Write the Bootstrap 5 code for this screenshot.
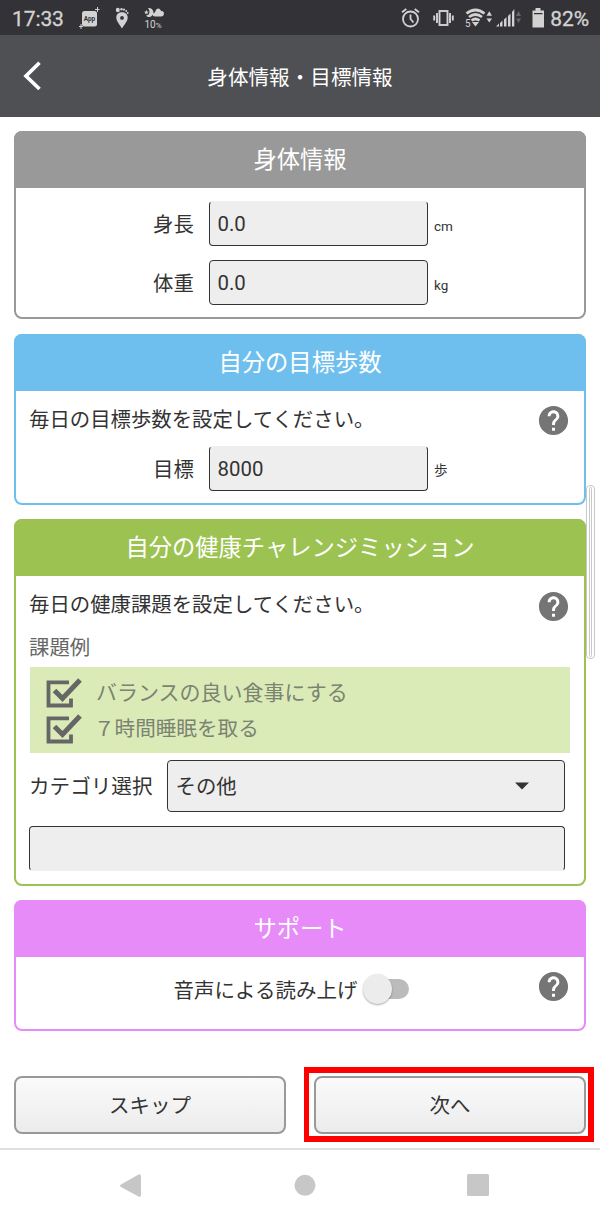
<!DOCTYPE html>
<html lang="ja">
<head>
<meta charset="utf-8">
<meta name="viewport" content="width=device-width, initial-scale=1">
<title>身体情報・目標情報</title>
<link href="https://cdn.jsdelivr.net/npm/bootstrap@5.3.0/dist/css/bootstrap.min.css" rel="stylesheet">
<style>
body{font-family:Roboto,"Noto Sans CJK JP",sans-serif;font-size:20.4px;line-height:30px;color:#333;width:600px;height:1225px;overflow:hidden;background:#fff}
svg{display:block;flex:none}
.status{height:35px;background:#333237;color:#d2d2d2;padding:0 11px 0 12px}
.status-text{font-size:21px;line-height:35px;letter-spacing:-.1px;white-space:nowrap;padding-top:3px;-webkit-text-stroke:.3px #d2d2d2}
.titlebar{height:82px;background:#4f5054;color:#fff;padding-left:23px}
.titlebar h1{font-size:20.6px;font-weight:400;line-height:30px;padding:3px 43px 0 0}
.content{height:1031px;padding:14px 14px 0;position:relative}
.panel{--c:#999;border:2px solid var(--c);border-radius:8px;margin-bottom:14.5px;background:#fff}
.panel-head{height:57px;margin:-2px -2px 0;border-radius:8px 8px 0 0;background:var(--c);color:#fff;font-size:23.3px;line-height:59px;text-align:center}
.body-info{height:188px;margin-bottom:15px}
.steps{--c:#6fbfee;height:171px;margin-bottom:14px}
.mission{--c:#9cc351;height:367px;margin-bottom:14px}
.support{--c:#e68bf8;height:131px;margin-bottom:45px}
.field{height:45px;line-height:45px;background:#eee;border:1px solid #333;border-radius:4px;padding-left:7.5px}
.field.no-top{border-top-color:#eee}
.field.no-bottom{border-bottom-color:#eee}
.num{width:219px}
.frow{padding-left:137px}
.frow .lab{width:56px;line-height:48px}
.unit{font-size:13.5px;line-height:20px;padding:15px 0 0 6px}
.lead-row{padding:12px 14px 0 13px}
.lead-row span{padding-top:1.5px;line-height:30px;height:30px}
.help{width:35px;height:35px;fill:#757575;margin-right:-1px}
.example{height:86px;width:540px;background:#dbebb8;margin-left:14px;padding:8px 0 0 15px;font-size:21px;line-height:36px;color:#7b8371}
.example .item{height:36px}
.example span{margin-left:14px;line-height:37px}
.example .narrow{font-size:20.6px}
.thumb{position:absolute;right:5px;top:368px;width:9px;height:174px;border:1px solid #c8c8c8;border-radius:4px;background:#fff}
.thumb::after{content:"";display:block;margin:1px auto 0;width:3px;height:170px;border:1px solid #c8c8c8;border-radius:2px;background:#fff}
.switch{width:47px;height:34px;position:relative;margin-left:5px}
.switch i{position:absolute;left:15px;top:7px;width:32px;height:20px;border-radius:10px;background:#bbb}
.switch b{position:absolute;left:1px;top:2px;width:29px;height:30px;border-radius:50%;background:#ececec;box-shadow:0 1px 2px #0005}
.actions{gap:28px}
.actbtn{width:272px;height:58px;border:2px solid #999;border-radius:8px;background:linear-gradient(#fafafa,#ececec);color:#333;font-size:20.5px;line-height:52px;text-align:center;position:relative;padding:2px 0 0}
.highlight{position:absolute;left:-12px;top:-11px;width:290px;height:75px;border:solid #f00;border-width:6px 6px 6px 5px;pointer-events:none}
.navbtns{height:77px;border-top:2px solid #e0e0e0}
</style>
</head>
<body>
<svg class="d-none"><symbol id="help" viewBox="0 0 24 24"><path d="M12 2C6.480 2 2 6.480 2 12s4.480 10 10 10 10-4.480 10-10S17.520 2 12 2zm1 17h-2v-2h2v2zm2.070-7.750l-.9.920C13.450 12.900 13 13.500 13 15h-2v-.5c0-1.100.450-2.100 1.170-2.830l1.240-1.260c.370-.360.590-.860.590-1.410 0-1.100-.9-2-2-2s-2 .9-2 2H8c0-2.210 1.790-4 4-4s4 1.790 4 4c0 .880-.360 1.680-.930 2.250z"/></symbol></svg>
<header>
  <div class="status d-flex align-items-center">
    <span class="status-text">17:33</span>
    <svg style="margin-left:15px" width="22" height="22" viewBox="0 0 22 22" fill="#d2d2d2"><rect x="3" y="4" width="15" height="15.500" rx="2.500"/><path d="M18.500 0v5M16 2.500h4.500M2 17v5M0 19.500h4" stroke="#d2d2d2"/><text x="10.500" y="13.500" font-size="6.500" font-weight="700" text-anchor="middle" fill="#333237">App</text></svg>
    <svg style="margin-left:14px" width="14" height="22" viewBox="0 0 14 22" fill="#d2d2d2"><path fill-rule="evenodd" d="M7 5.300C10 5.300 12.700 7 12.700 10.500 12.700 14 9.500 17.500 7 21.500 4.500 17.500 1.300 14 1.300 10.500 1.300 7 4 5.300 7 5.300ZM7 9a1.900 1.900 0 1 0 0 3.800A1.900 1.900 0 0 0 7 9Z"/><ellipse cx="2.800" cy="3" rx="2" ry="2.300"/><circle cx="6.500" cy="2.200" r="1.200"/><circle cx="9" cy="2.600" r="1.100"/><circle cx="11.200" cy="4" r="1"/><circle cx="12.700" cy="6" r=".9"/></svg>
    <svg style="margin-left:14px" width="24" height="26" viewBox="0 0 24 26" fill="#d2d2d2"><path d="M5 3C11 2.500 12 9.500 8 11.500 6 12.500 4 12 3 10.500 6 10.500 8 7 5 3Z"/><path d="M3.500 5l.7 1.500 1.500.3-1.200 1 .2 1.500-1.200-.8-1.400.8.200-1.500-1.200-1 1.600-.3ZM12 11.500c-3 0-3-4 0-4 1-5 5-5 6-1.500 4-.5 4 5.500 0 5.500Z"/><text x="1.500" y="23.300" font-size="10">10<tspan font-size="8">%</tspan></text></svg>
    <div class="ms-auto d-flex align-items-center">
      <svg width="19" height="20" viewBox="0 0 19 20" fill="none" stroke="#d2d2d2" stroke-width="1.800"><circle cx="9.500" cy="11" r="7.500"/><path d="M9.500 6.500V11l3 3.500M1 4.300l4.300-3.300M18 4.300l-4.300-3.300"/></svg>
      <svg style="margin-left:13px" width="21" height="18" viewBox="0 0 21 18" fill="none" stroke="#d2d2d2" stroke-width="1.900"><rect x="6.500" y="2" width="8" height="14"/><path d="M4 4v10M17 4v10M1.200 6.500v5M19.800 6.500v5"/></svg>
      <svg style="margin-left:11px" width="28" height="24" viewBox="0 -2 28 24" fill="none" stroke="#d2d2d2" stroke-width="2.700"><path d="M1.500 5.500Q10.500-1.500 19.500 5.500M4 9Q10.500 4 17 9M6.500 12.500Q10.500 9.500 14.500 12.500"/><path d="M7 14h7L10.500 18.500ZM21.500 7.800l2.800-4.500L27 7.800ZM21.500 10.500H27L24.300 14.500Z" fill="#d2d2d2" stroke="none"/><text x="0" y="18.500" font-size="10" fill="#d2d2d2" stroke="#333237" stroke-width="1.500" paint-order="stroke">5</text></svg>
      <svg style="margin-left:3px" width="26" height="20" viewBox="0 0 26 20" fill="#d2d2d2"><path d="M0 18.500h3v-3ZM4 18.500h2.500v-6L4 15ZM8 18.500h2.500V9L8 11.500ZM12 18.500h2.500V5.500L12 8ZM16 18.500h2.300V1L16 4Z"/><path d="M20 8l2.500-5L25 8ZM20 10.500h5L22.500 15Z" fill="#66666b"/></svg>
      <svg style="margin-left:10px" width="12" height="20" viewBox="0 0 12 20"><path d="M3.500 0h5v2.500H12v17H.5V2.500h3ZM2 5v1.200h8.500V5Z" fill="#d2d2d2" fill-rule="evenodd"/></svg>
      <span class="status-text" style="margin-left:6px">82%</span>
    </div>
  </div>
  <div class="titlebar d-flex align-items-center">
    <svg width="20" height="30" viewBox="0 0 20 30" fill="none" stroke="#fff" stroke-width="3.700"><path d="M16.500 1.800 3 15l13.500 13"/></svg>
    <h1 class="flex-fill text-center mb-0">身体情報・目標情報</h1>
  </div>
</header>
<main class="content">
  <section class="panel body-info">
    <div class="panel-head">身体情報</div>
    <div class="frow d-flex" style="padding-top:13px"><div class="lab">身長</div><div class="field num no-top">0.0</div><div class="unit">cm</div></div>
    <div class="frow d-flex" style="padding-top:11px"><div class="lab">体重</div><div class="field num">0.0</div><div class="unit">kg</div></div>
  </section>
  <section class="panel steps">
    <div class="panel-head">自分の目標歩数</div>
    <div class="lead-row d-flex justify-content-between"><span>毎日の目標歩数を設定してください。</span><svg class="help" style="margin-bottom:-2px"><use href="#help"/></svg></div>
    <div class="frow d-flex" style="padding-top:10px"><div class="lab">目標</div><div class="field num no-top">8000</div><div class="unit" style="padding-top:14px">歩</div></div>
  </section>
  <section class="panel mission">
    <div class="panel-head">自分の健康チャレンジミッション</div>
    <div class="lead-row d-flex justify-content-between"><span>毎日の健康課題を設定してください。</span><svg class="help" style="margin:.5px -1px -2.5px 0"><use href="#help"/></svg></div>
    <div style="padding:11px 0 0 13px;line-height:32px;color:#666;height:46px">課題例</div>
    <div class="example">
      <div class="item d-flex"><svg width="37" height="36" viewBox="0 0 37 36" fill="none" stroke="#666"><path d="M24 7.300H3.500v23.200H26v-7" stroke-width="3.800"/><path d="M9.500 15.500l8 8L35 5" stroke-width="5"/></svg><span>バランスの良い食事にする</span></div>
      <div class="item d-flex"><svg width="37" height="36" viewBox="0 0 37 36" fill="none" stroke="#666"><path d="M24 7.300H3.500v23.200H26v-7" stroke-width="3.800"/><path d="M9.500 15.500l8 8L35 5" stroke-width="5"/></svg><span class="narrow" style="margin-left:12px">７時間睡眠を取る</span></div>
    </div>
    <div class="d-flex" style="padding:7px 0 0 13px"><div style="width:138px;line-height:54px;height:52px;font-size:20.6px">カテゴリ選択</div>
      <div class="field d-flex align-items-center justify-content-between" style="width:398px;height:52px;padding-right:35px"><span style="padding-top:2px">その他</span><svg width="14" height="8" viewBox="0 0 14 8"><path d="M0 .5h14L7 7.500Z" fill="#333"/></svg></div></div>
    <div class="field no-bottom" style="width:536px;margin:14px 0 0 13px"></div>
  </section>
  <section class="panel support">
    <div class="panel-head">サポート</div>
    <div class="d-flex" style="padding:12px 14px 0 157.500px"><span style="padding-top:7px;font-size:20.5px;line-height:30px">音声による読み上げ</span><div class="switch" style="margin-top:3px"><i></i><b></b></div>
      <svg class="help ms-auto"><use href="#help"/></svg></div>
  </section>
  <div class="actions d-flex">
    <button class="actbtn">スキップ</button>
    <button class="actbtn">次へ<span class="highlight"></span></button>
  </div>
  <div class="thumb"></div>
</main>
<nav class="navbtns d-flex" style="padding:24px 0 0 120px">
  <svg width="21" height="24" viewBox="0 0 21 24"><path d="M1 10.500 18.500.500Q21-.200 21 2v19q0 2.500-2.500 1.500L1 13Q-.800 11.700 1 10.500Z" fill="#c7c7c7"/></svg>
  <svg style="margin-left:153px" width="22" height="24" viewBox="0 0 22 24"><circle cx="11" cy="11.300" r="10.500" fill="#c7c7c7"/></svg>
  <svg style="margin-left:151px" width="22" height="24" viewBox="0 0 22 24"><rect y="0" width="22" height="22" rx="1.500" fill="#c7c7c7"/></svg>
</nav>
<script src="https://cdn.jsdelivr.net/npm/bootstrap@5.3.0/dist/js/bootstrap.bundle.min.js"></script>
</body>
</html>
